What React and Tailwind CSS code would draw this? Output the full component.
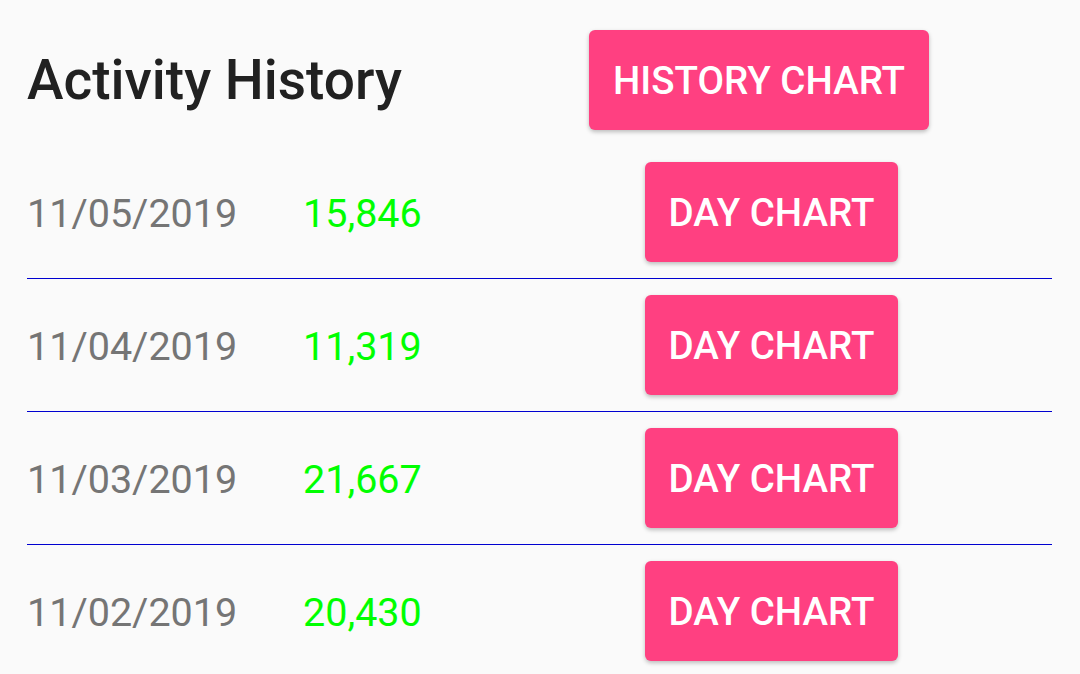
import React from 'react';

const days = [
  { date: '11/05/2019', steps: '15,846' },
  { date: '11/04/2019', steps: '11,319' },
  { date: '11/03/2019', steps: '21,667' },
  { date: '11/02/2019', steps: '20,430' },
];

const ChartButton = ({ label, width }) => (
  <button
    className={`${width} h-[100px] shrink-0 rounded-[6px] bg-[#ff4081] pt-[3px] text-white text-[38.5px] font-medium leading-none shadow-[0_2px_4px_rgba(0,0,0,0.25)]`}
  >
    {label}
  </button>
);

const App = () => {
  return (
    <div
      className="h-[674px] w-[1080px] overflow-hidden bg-[#fafafa] pt-[30px] pl-[27px] pr-[28px]"
      style={{ fontFamily: 'Roboto, "Liberation Sans", sans-serif' }}
    >
      <div className="flex h-[100px] items-center">
        <h1 className="w-[562px] shrink-0 text-[55px] font-medium leading-none text-[#212121]">Activity History</h1>
        <ChartButton label="HISTORY CHART" width="w-[340px]" />
      </div>

      <div className="mt-4">
        {days.map((day) => (
          <div key={day.date} className="flex items-center border-b border-[#0000d0] py-4 last:border-b-0">
            <span className="w-[276px] shrink-0 pt-[4px] text-[39.5px] leading-none text-[#757575]">{day.date}</span>
            <span className="w-[342px] shrink-0 pt-[4px] text-[39.5px] leading-none text-[#00ff00]">{day.steps}</span>
            <ChartButton label="DAY CHART" width="w-[253px]" />
          </div>
        ))}
      </div>
    </div>
  );
};

export default App;
